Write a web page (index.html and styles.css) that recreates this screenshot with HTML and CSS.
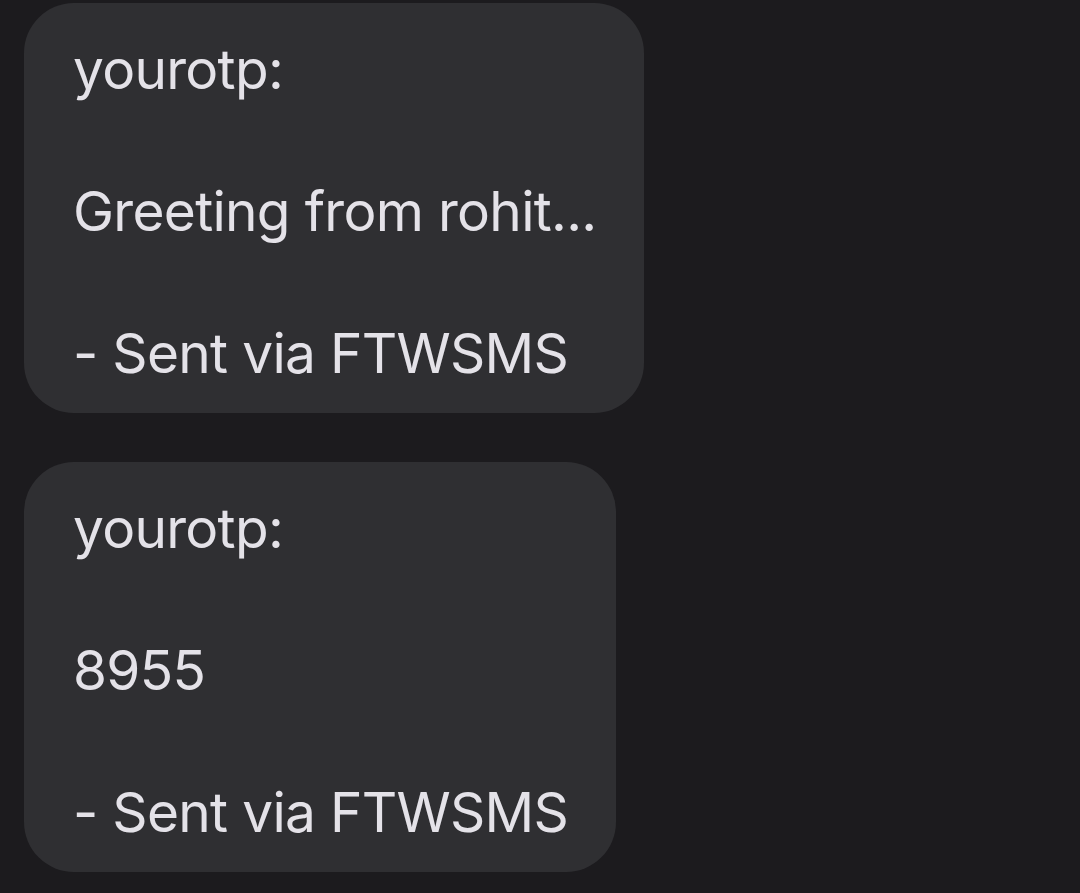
FILE: index.html
```html
<!DOCTYPE html>
<html>
<head>
<meta charset="utf-8">
<link rel="stylesheet" href="styles.css">
</head>
<body>
<div class="thread">
  <div class="bubble">
    <p class="line">yourotp:</p>
    <p class="line blank">&nbsp;</p>
    <p class="line">Greeting from rohit...</p>
    <p class="line blank">&nbsp;</p>
    <p class="line">- Sent via FTWSMS</p>
  </div>
  <div class="bubble">
    <p class="line">yourotp:</p>
    <p class="line blank">&nbsp;</p>
    <p class="line">8955</p>
    <p class="line blank">&nbsp;</p>
    <p class="line">- Sent via FTWSMS</p>
  </div>
</div>
</body>
</html>
```

FILE: styles.css
```css
html, body {
  margin: 0;
  padding: 0;
  background: #1c1b1e;
  height: 100%;
}
.thread {
  display: flex;
  flex-direction: column;
  align-items: flex-start;
  gap: 49px;
  padding: 3px 0 0 24px;
}
.bubble {
  background: #2f2f32;
  border-radius: 50px;
  padding: 31px 48px 24px 49px;
  font-family: "Inter", sans-serif;
  font-size: 55px;
  letter-spacing: -0.7px;
  line-height: 71px;
  color: #e4e2e8;
}
.line {
  margin: 0;
  white-space: nowrap;
}
```
